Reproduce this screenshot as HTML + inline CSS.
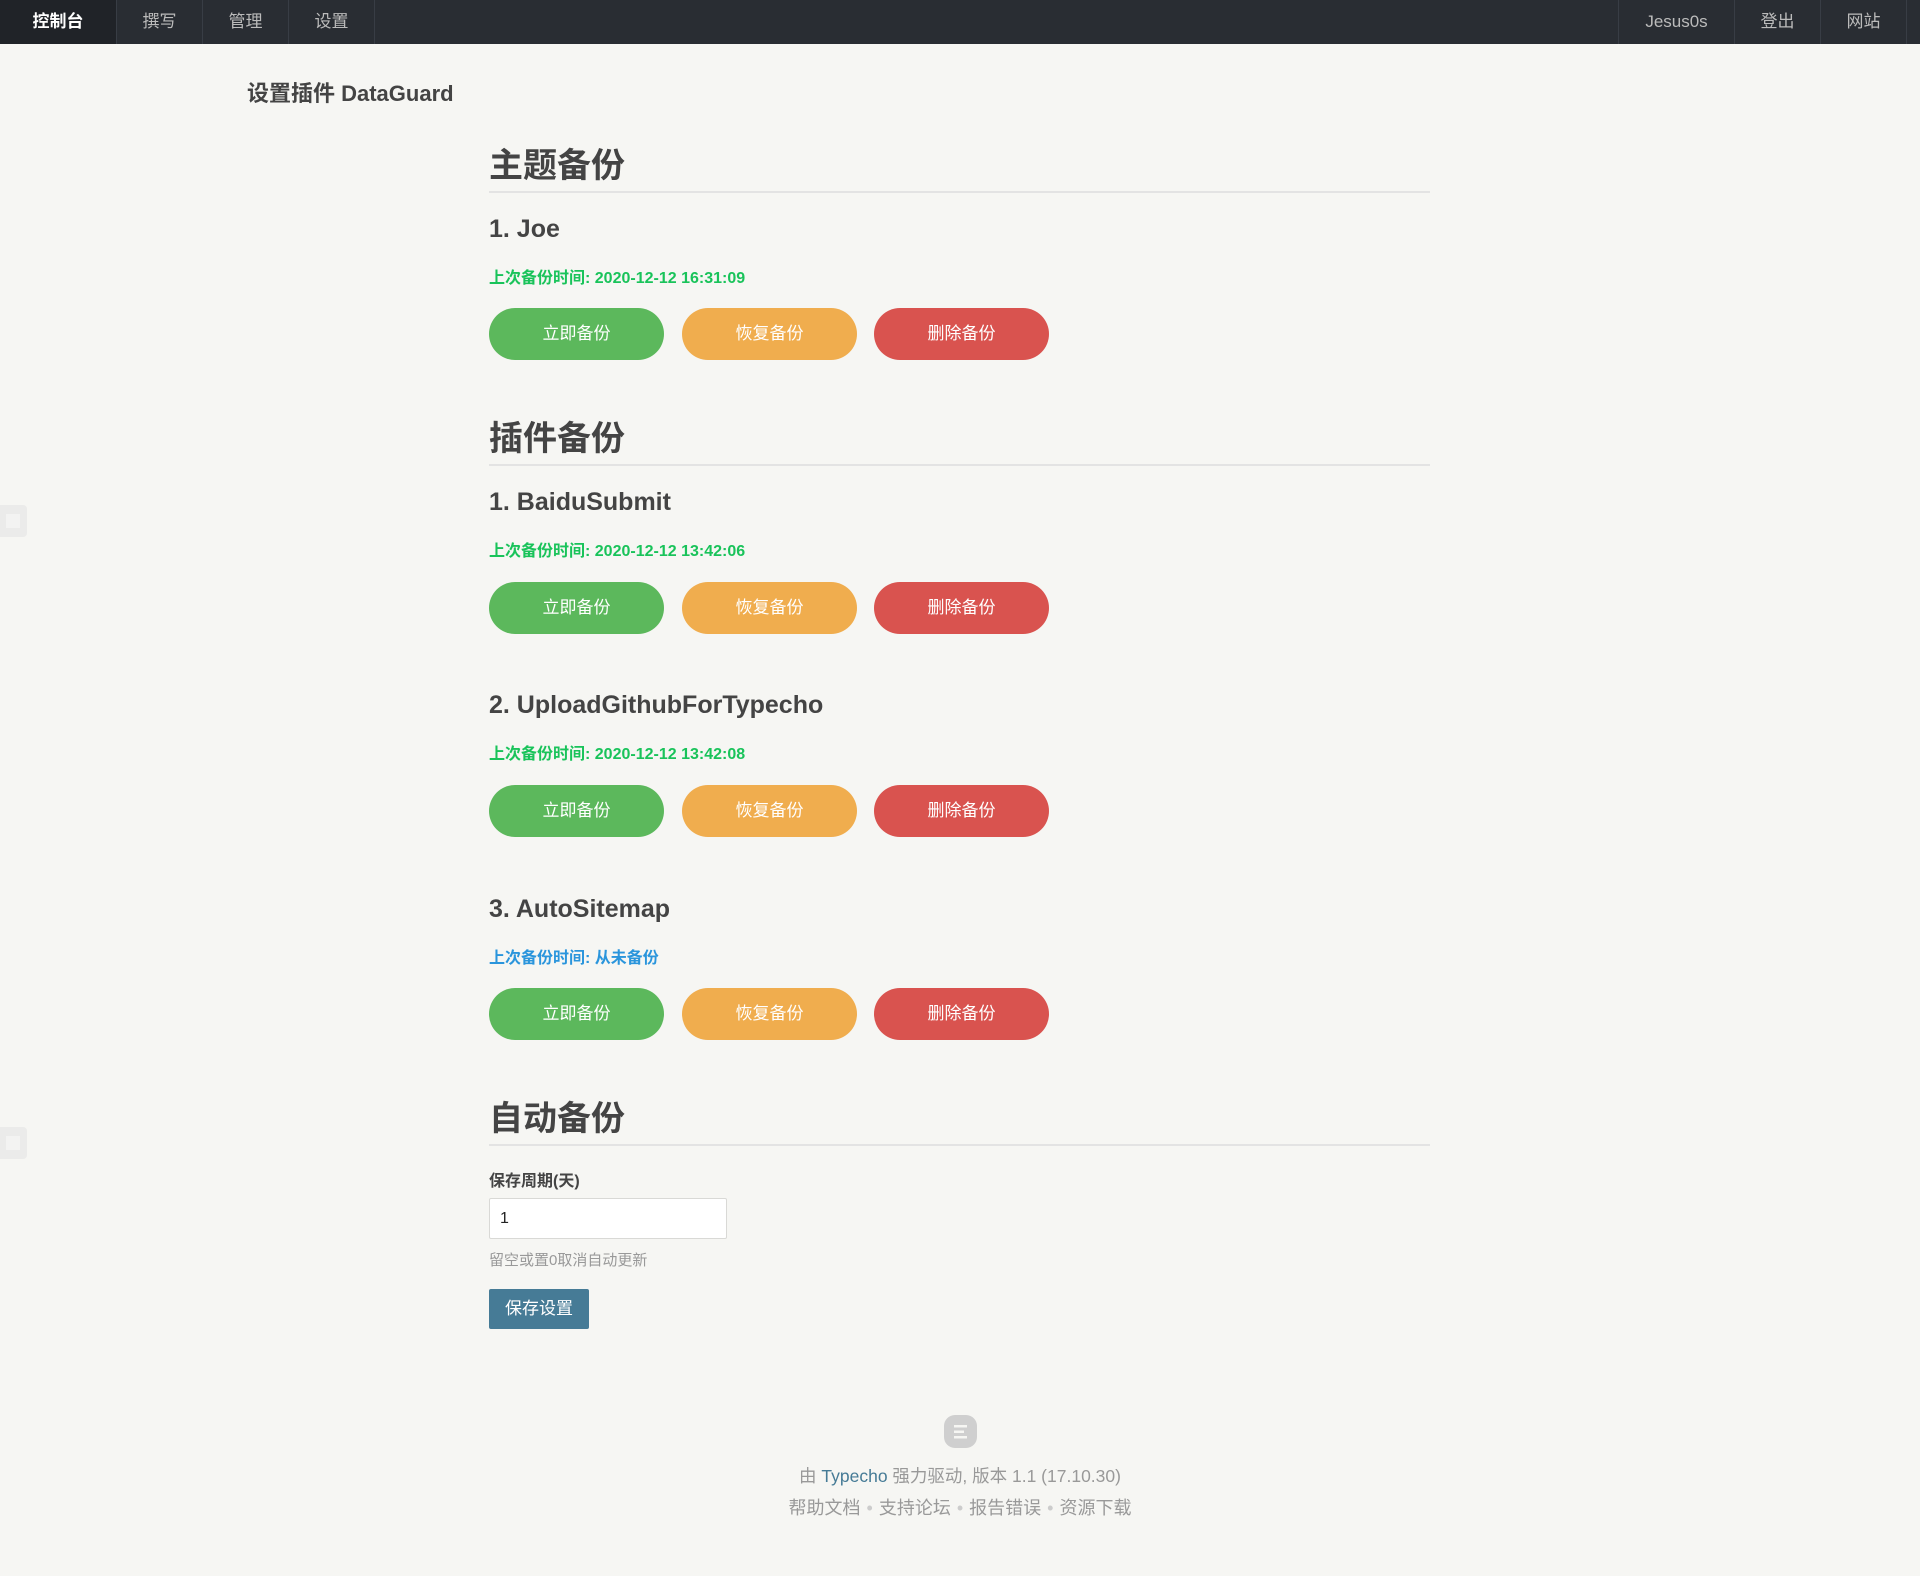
<!DOCTYPE html>
<html><head><meta charset="utf-8"><style>
*{margin:0;padding:0;box-sizing:border-box}
body{width:1920px;height:1576px;background:#f6f6f3;font-family:"Liberation Sans","Noto Sans CJK SC",sans-serif;color:#444;position:relative;overflow:hidden}
.nav{position:absolute;left:0;top:0;width:1920px;height:44px;background:#292d33}
.nav a{position:absolute;top:0;height:44px;line-height:44px;text-align:center;color:#bbb;font-size:17px;border-right:1px solid #383d45}
.nav a.r{border-right:none;border-left:1px solid #383d45}
.nav a.act{background:#202328;color:#fff;font-weight:bold}
.abs{position:absolute}
h1{position:absolute;left:247px;top:76px;font-size:22px;font-weight:bold;color:#444}
.h2{position:absolute;left:489px;font-size:34px;font-weight:bold;color:#444;line-height:40px}
.hr{position:absolute;left:489px;width:941px;height:2px;background:#e3e3e3}
.h3{position:absolute;left:489px;font-size:25px;font-weight:bold;color:#444;line-height:30px}
.t{position:absolute;left:489px;font-size:16px;font-weight:bold;color:#19c35a;line-height:20px}
.btn{position:absolute;width:175px;height:52px;border-radius:26px;color:#fff;font-size:17px;line-height:52px;text-align:center}
.g{background:#5cb85c}.o{background:#f0ad4e}.rd{background:#d9534f}
.sq{position:absolute;left:0;width:27px;height:32px;background:#ebebea;border-radius:0 4px 4px 0}
.sq i{position:absolute;left:6px;top:9px;width:14px;height:14px;background:#f3f3f2}
.dot{color:#ccc;margin:0 6px}
</style></head><body>
<div class="nav">
<a class="act" style="left:0;width:117px">控制台</a>
<a style="left:117px;width:86px">撰写</a>
<a style="left:203px;width:86px">管理</a>
<a style="left:289px;width:86px">设置</a>
<a class="r" style="left:1618px;width:116px">Jesus0s</a>
<a class="r" style="left:1734px;width:86px">登出</a>
<a class="r" style="left:1820px;width:87px;border-right:1px solid #383d45">网站</a>
</div>
<h1>设置插件 DataGuard</h1>

<div class="h2" style="top:146px">主题备份</div><div class="hr" style="top:191px"></div>
<div class="h3" style="top:214px">1. Joe</div>
<div class="t" style="top:269px">上次备份时间: 2020-12-12 16:31:09</div>
<div class="btn g" style="left:489px;top:308px">立即备份</div><div class="btn o" style="left:682px;top:308px">恢复备份</div><div class="btn rd" style="left:874px;top:308px">删除备份</div>

<div class="h2" style="top:419px">插件备份</div><div class="hr" style="top:464px"></div>
<div class="h3" style="top:487px">1. BaiduSubmit</div>
<div class="t" style="top:542px">上次备份时间: 2020-12-12 13:42:06</div>
<div class="btn g" style="left:489px;top:582px">立即备份</div><div class="btn o" style="left:682px;top:582px">恢复备份</div><div class="btn rd" style="left:874px;top:582px">删除备份</div>

<div class="h3" style="top:690px">2. UploadGithubForTypecho</div>
<div class="t" style="top:745px">上次备份时间: 2020-12-12 13:42:08</div>
<div class="btn g" style="left:489px;top:785px">立即备份</div><div class="btn o" style="left:682px;top:785px">恢复备份</div><div class="btn rd" style="left:874px;top:785px">删除备份</div>

<div class="h3" style="top:894px">3. AutoSitemap</div>
<div class="t" style="top:949px;color:#2a95dc">上次备份时间: 从未备份</div>
<div class="btn g" style="left:489px;top:988px">立即备份</div><div class="btn o" style="left:682px;top:988px">恢复备份</div><div class="btn rd" style="left:874px;top:988px">删除备份</div>

<div class="h2" style="top:1099px">自动备份</div><div class="hr" style="top:1144px"></div>
<div class="abs" style="left:489px;top:1167px;font-size:16px;font-weight:bold;color:#444">保存周期(天)</div>
<div class="abs" style="left:489px;top:1198px;width:238px;height:41px;background:#fff;border:1px solid #d9d9d6;border-radius:2px;font-size:16px;line-height:39px;padding-left:10px;color:#222">1</div>
<div class="abs" style="left:489px;top:1249px;font-size:15px;color:#999">留空或置0取消自动更新</div>
<div class="abs" style="left:489px;top:1289px;width:100px;height:40px;background:#467b96;border-radius:2px;color:#fff;font-size:17px;line-height:40px;text-align:center">保存设置</div>

<div class="sq" style="top:505px"><i></i></div>
<div class="sq" style="top:1127px"><i></i></div>

<svg class="abs" style="left:944px;top:1415px" width="33" height="33" viewBox="0 0 33 33"><rect x="0" y="0" width="33" height="33" rx="11" fill="#cfcfcf"/><rect x="10" y="10" width="13" height="2.5" fill="#f6f6f3"/><rect x="10" y="15.5" width="10" height="2.5" fill="#f6f6f3"/><rect x="10" y="21" width="13" height="2.5" fill="#f6f6f3"/></svg>
<div class="abs" style="left:0;width:1920px;top:1463px;text-align:center;font-size:17.5px;color:#999">由 <span style="color:#467b96">Typecho</span> 强力驱动, 版本 1.1 (17.10.30)</div>
<div class="abs" style="left:0;width:1920px;top:1494px;text-align:center;font-size:18px;color:#999">帮助文档<span class="dot">•</span>支持论坛<span class="dot">•</span>报告错误<span class="dot">•</span>资源下载</div>
</body></html>
